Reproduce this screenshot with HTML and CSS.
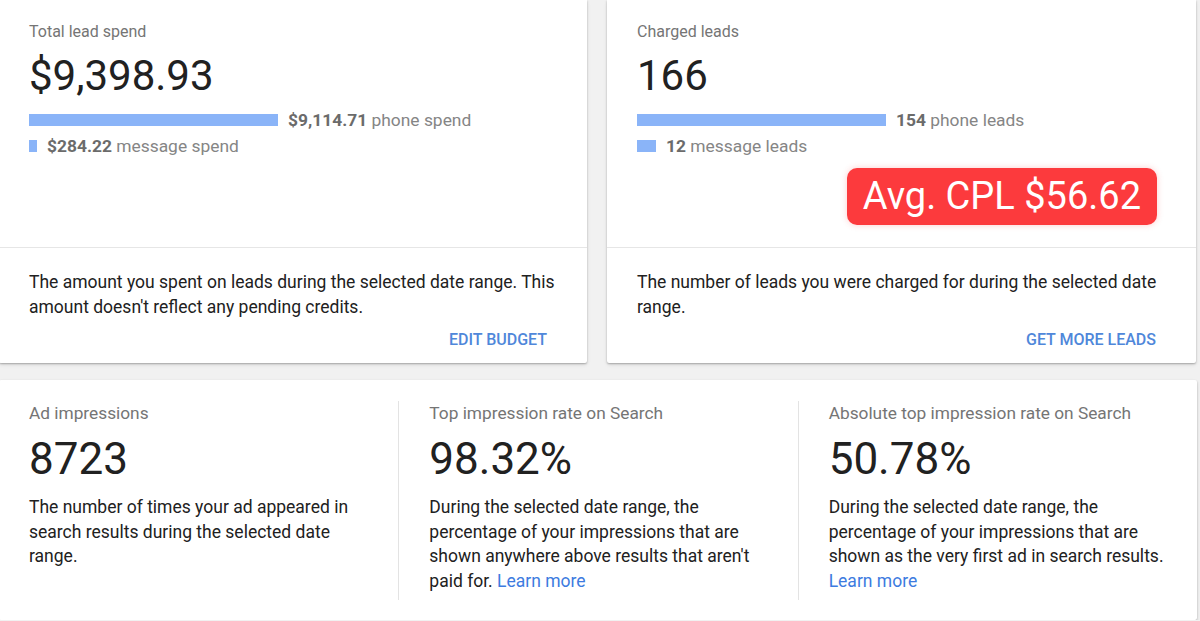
FILE: index.html
```html
<!DOCTYPE html>
<html lang="en">
<head>
    <meta charset="UTF-8">
    <title>Lead summary</title>
    <link rel="stylesheet" href="styles.css">
</head>
<body>

    <div class="page">

        <!-- Spend and leads cards -->
        <div class="top-row">
            <section class="card">
                <div class="card-main">
                    <div class="card-label">Total lead spend</div>
                    <div class="card-value">$9,398.93</div>
                    <div class="bar-row">
                        <span class="bar" style="width: 249px"></span>
                        <span class="bar-text"><b>$9,114.71</b> phone spend</span>
                    </div>
                    <div class="bar-row">
                        <span class="bar" style="width: 8px"></span>
                        <span class="bar-text"><b>$284.22</b> message spend</span>
                    </div>
                </div>
                <div class="card-foot">
                    <p>The amount you spent on leads during the selected date range. This amount doesn't reflect any pending credits.</p>
                    <a class="card-action" href="#">EDIT BUDGET</a>
                </div>
            </section>

            <section class="card">
                <div class="card-main">
                    <div class="card-label">Charged leads</div>
                    <div class="card-value">166</div>
                    <div class="bar-row">
                        <span class="bar" style="width: 249px"></span>
                        <span class="bar-text"><b>154</b> phone leads</span>
                    </div>
                    <div class="bar-row">
                        <span class="bar" style="width: 19px"></span>
                        <span class="bar-text"><b>12</b> message leads</span>
                    </div>
                    <div class="cpl-badge">Avg. CPL $56.62</div>
                </div>
                <div class="card-foot">
                    <p>The number of leads you were charged for during the selected date range.</p>
                    <a class="card-action" href="#">GET MORE LEADS</a>
                </div>
            </section>
        </div>

        <!-- Impression stats -->
        <section class="card stats">
            <div class="stat">
                <div class="stat-label">Ad impressions</div>
                <div class="stat-value">8723</div>
                <p>The number of times your ad appeared in search results during the selected date range.</p>
            </div>
            <div class="stat">
                <div class="stat-label">Top impression rate on Search</div>
                <div class="stat-value">98.32%</div>
                <p>During the selected date range, the percentage of your impressions that are shown anywhere above results that aren't paid for. <a href="#">Learn more</a></p>
            </div>
            <div class="stat">
                <div class="stat-label">Absolute top impression rate on Search</div>
                <div class="stat-value">50.78%</div>
                <p>During the selected date range, the percentage of your impressions that are shown as the very first ad in search results. <a href="#">Learn more</a></p>
            </div>
        </section>

    </div>

</body>
</html>
```

FILE: styles.css
```css
* {
    margin: 0;
    padding: 0;
    box-sizing: border-box;
}
body {
    background-color: #f1f1f1;
    font-family: 'Roboto', 'Liberation Sans', sans-serif;
    color: #212121;
}
.page {
    margin-left: -1px;
    width: 1198px;
}
.top-row {
    display: grid;
    grid-template-columns: 588px 589px;
    gap: 20px;
}
.card {
    background: #fff;
    border-radius: 0 0 2px 2px;
    box-shadow: 0 1px 2px rgba(0, 0, 0, 0.28), 0 2px 4px rgba(0, 0, 0, 0.08);
}
.card-main {
    height: 248px;
    padding: 22px 40px 0 30px;
    border-bottom: 1px solid #e6e6e6;
    display: flex;
    flex-direction: column;
}
.card-label {
    font-size: 16px;
    line-height: 20px;
    color: #757575;
}
.card-value {
    font-size: 42px;
    line-height: 48px;
    margin-top: 10px;
    color: #212121;
}
.bar-row {
    display: flex;
    align-items: center;
    gap: 10px;
    height: 24px;
    margin-top: 2px;
}
.card-value + .bar-row {
    margin-top: 8px;
}
.bar {
    display: block;
    height: 12px;
    background-color: #8ab4f8;
}
.bar-text {
    font-size: 17.4px;
    color: #858585;
}
.bar-text b {
    color: #6b6b6b;
    font-weight: 700;
}
.cpl-badge {
    align-self: flex-end;
    margin-top: 10px;
    margin-right: -1px;
    background-color: #fc3a3d;
    color: #fff;
    font-size: 38px;
    line-height: 57px;
    padding: 0 16px;
    border-radius: 10px;
    box-shadow: 0 0 6px rgba(252, 58, 61, 0.25);
}
.card-foot {
    padding: 22px 30px 13px 30px;
    display: flex;
    flex-direction: column;
}
.card-foot p {
    font-size: 17.5px;
    line-height: 25px;
    color: #212121;
}
.card-action {
    align-self: flex-end;
    margin-top: 10px;
    margin-right: 10px;
    font-size: 16px;
    line-height: 20px;
    font-weight: 500;
    color: #4f87da;
    text-decoration: none;
}
.stats {
    margin-top: 17px;
    padding: 21px 0 20px;
    display: grid;
    grid-template-columns: 1fr 1fr 1fr;
    border-radius: 2px;
}
.stat {
    padding: 0 30px 6px;
}
.stat + .stat {
    border-left: 1px solid #e3e3e3;
}
.stat-label {
    font-size: 17.3px;
    line-height: 24px;
    color: #757575;
}
.stat-value {
    font-size: 44px;
    line-height: 48px;
    margin-top: 10px;
    color: #212121;
}
.stat p {
    margin-top: 12px;
    font-size: 17.5px;
    line-height: 24.7px;
    color: #212121;
}
.stat p a {
    color: #3d7be0;
    text-decoration: none;
}
```
